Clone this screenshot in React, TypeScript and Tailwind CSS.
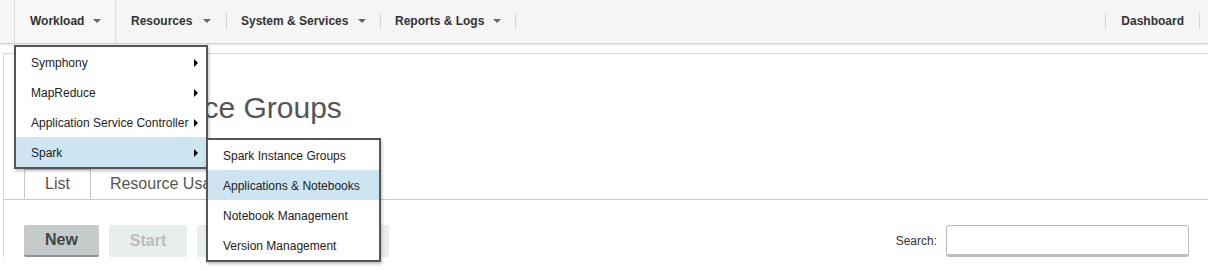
import React from 'react'

const font = { fontFamily: '"Liberation Sans", Arial, sans-serif' }

function Caret() {
    return (
        <span className="ml-auto inline-block h-0 w-0 border-x-[4px] border-t-[4px] border-x-transparent border-t-[#666]" />
    )
}

function RightArrow() {
    return (
        <span className="inline-block h-0 w-0 border-y-[4px] border-l-[4px] border-y-transparent border-l-black" />
    )
}

function Sep() {
    return <span className="h-[16px] w-px bg-[#d4d4d4]" />
}

const mainMenu = [
    { label: 'Symphony' },
    { label: 'MapReduce' },
    { label: 'Application Service Controller' },
    { label: 'Spark', active: true },
]

const sparkMenu = [
    { label: 'Spark Instance Groups' },
    { label: 'Applications & Notebooks', active: true },
    { label: 'Notebook Management' },
    { label: 'Version Management' },
]

export default function App() {
    return (
        <div className="relative h-[270px] w-full overflow-hidden bg-white" style={font}>
            {/* top nav */}
            <div className="flex h-[44px] items-center border-b border-[#d2d2d2] bg-[#f5f5f5] pb-[2px] text-[12px] font-bold text-[#333] shadow-[0_1px_2px_rgba(0,0,0,0.12)]">
                <div className="ml-[14px] -mb-[2px] flex h-[43px] w-[102px] items-center border-x border-[#dcdcdc] bg-[#f7f7f7] pb-[2px] pl-[15px] pr-[14px]">
                    Workload
                    <Caret />
                </div>
                <div className="flex w-[110px] items-center pl-[15px] pr-[15px]">
                    Resources
                    <Caret />
                </div>
                <Sep />
                <div className="flex w-[153px] items-center pl-[14px] pr-[14px]">
                    System &amp; Services
                    <Caret />
                </div>
                <Sep />
                <div className="flex w-[134px] items-center pl-[14px] pr-[14px]">
                    Reports &amp; Logs
                    <Caret />
                </div>
                <Sep />
                <div className="ml-auto flex items-center">
                    <Sep />
                    <span className="px-[15px]">Dashboard</span>
                    <Sep />
                    <span className="w-[8px]" />
                </div>
            </div>

            {/* page */}
            <div className="ml-[3px] mt-[9px] border-l border-t border-[#d6d6d6] pl-[20px] pr-[19px]">
                <h1 className="ml-[11px] pt-[37px] text-[30px] leading-[34px] text-[#555]">
                    Spark Instance Groups
                </h1>
                <div className="-ml-[20px] -mr-[19px] mt-[44px] flex border-b border-[#c8c8c8] pl-[20px] text-[16px] text-[#555]">
                    <div className="-mb-px flex h-[30px] items-center border-x border-t border-[#c8c8c8] border-b border-b-white bg-white px-[20px]">
                        List
                    </div>
                    <div className="flex h-[30px] items-center px-[19px]">Resource Usage</div>
                </div>
                <div className="mt-[25px] flex items-center">
                    <button className="h-[32px] w-[75px] rounded-[2px] border-b-2 border-[#8e9595] bg-[#c5cbcb] text-[16px] font-bold text-[#444]">
                        New
                    </button>
                    <button className="ml-[10px] h-[32px] w-[78px] rounded-[2px] bg-[#e8eeee] text-[16px] font-bold text-[#bcbcbc]">
                        Start
                    </button>
                    <button className="ml-[10px] h-[32px] w-[88px] rounded-[2px] bg-[#e8eeee] text-[16px] font-bold text-[#bcbcbc]">
                        Stop
                    </button>
                    <button className="ml-[10px] h-[32px] w-[94px] rounded-[2px] bg-[#e8eeee] text-[16px] font-bold text-[#bcbcbc]">
                        Remove
                    </button>
                    <label className="ml-auto mr-[9px] text-[12px] text-[#333]">Search:</label>
                    <input
                        className="h-[32px] w-[243px] rounded-[3px] border border-b-[3px] border-[#b9bfbf] bg-white outline-none"
                        type="text"
                    />
                </div>
            </div>

            {/* workload dropdown */}
            <div className="absolute left-[14px] top-[45px] w-[194px] border-2 border-[#555] bg-white text-[12px] text-[#222] shadow-[1px_2px_3px_rgba(0,0,0,0.25)]">
                {mainMenu.map((item) => (
                    <div
                        key={item.label}
                        className={
                            'flex h-[30px] items-center justify-between pl-[15px] pr-[8px] pt-[2px] ' +
                            (item.active ? 'bg-[#cde5f0]' : '')
                        }
                    >
                        <span className="whitespace-nowrap">{item.label}</span>
                        <RightArrow />
                    </div>
                ))}
            </div>

            {/* spark submenu */}
            <div className="absolute left-[206px] top-[138px] w-[175px] border-2 border-[#555] bg-white text-[12px] text-[#222] shadow-[1px_2px_3px_rgba(0,0,0,0.25)]">
                {sparkMenu.map((item) => (
                    <div
                        key={item.label}
                        className={
                            'flex h-[30px] items-center whitespace-nowrap pl-[15px] pt-[2px] ' +
                            (item.active ? 'bg-[#cde5f0]' : '')
                        }
                    >
                        {item.label}
                    </div>
                ))}
            </div>
        </div>
    )
}
